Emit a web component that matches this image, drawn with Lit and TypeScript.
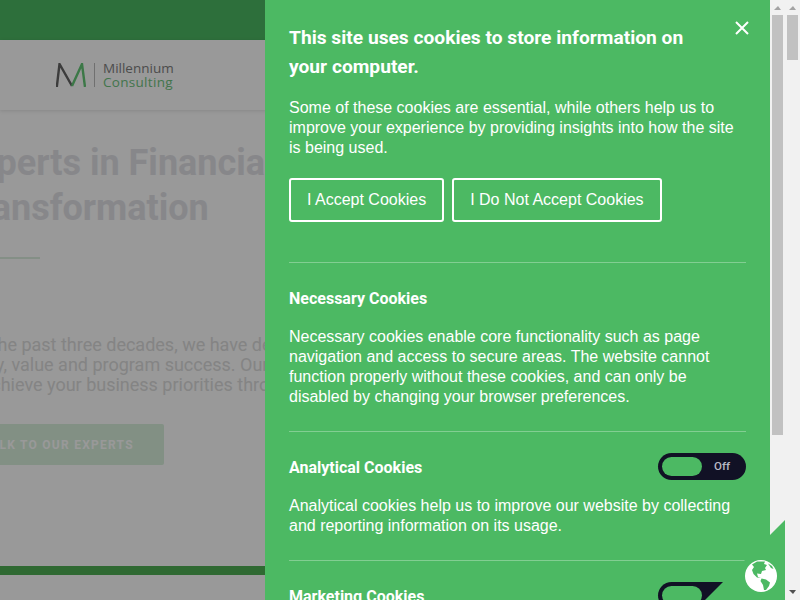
import { LitElement, html, css } from 'lit';
import { customElement } from 'lit/decorators.js';

@customElement('app-root')
export class AppRoot extends LitElement {
  static styles = css`
    :host {
      display: block;
      height: 600px;
      overflow: hidden;
      background: #fff;
      font-family: Roboto, sans-serif;
    }
    .top-bar {
      height: 40px;
      background: #4cb963;
    }
    .site-header {
      height: 70px;
      display: flex;
      align-items: center;
      padding-left: 56px;
      gap: 8px;
      box-shadow: 0 1px 4px rgba(0, 0, 0, 0.12);
    }
    .logo-bar {
      width: 1px;
      height: 24px;
      background: #bbb;
    }
    .logo-words {
      font-family: 'Open Sans', sans-serif;
      font-size: 13.5px;
      line-height: 14px;
      color: #808080;
    }
    .logo-words span {
      display: block;
      color: #6fc480;
      letter-spacing: 0.3px;
    }
    .hero {
      height: 456px;
      margin-left: -42px;
      padding-top: 31px;
      box-sizing: border-box;
      white-space: nowrap;
    }
    h1 {
      margin: 0;
      font-size: 36px;
      line-height: 45px;
      font-weight: 700;
      color: #e2e2e6;
    }
    .rule {
      width: 82px;
      height: 2px;
      margin: 26px 0 76px;
      background: #dceee0;
    }
    .hero p {
      margin: 0;
      padding-left: 3px;
      font-size: 18px;
      line-height: 20px;
      color: #dcdcdc;
    }
    .cta {
      display: block;
      margin-top: 29px;
      width: 206px;
      height: 41px;
      box-sizing: border-box;
      padding-right: 6px;
      line-height: 43px;
      text-align: center;
      border-radius: 2px;
      background: #d9f0dd;
      color: #fff;
      font-size: 12px;
      font-weight: 700;
      letter-spacing: 1.25px;
    }
    .strip {
      height: 9px;
      background: #4fb054;
    }
    .scrim {
      position: fixed;
      inset: 0;
      background: rgba(0, 0, 0, 0.4);
    }
    .panel {
      position: fixed;
      top: 0;
      right: 30px;
      bottom: 0;
      width: 505px;
      box-sizing: border-box;
      overflow-y: auto;
      background: #4cb963;
      color: #fff;
      padding: 23px 24px 0;
      font-family: 'Liberation Sans', Arial, sans-serif;
      font-size: 16px;
      line-height: 20px;
    }
    .close {
      position: absolute;
      top: 21px;
      right: 21px;
      width: 14px;
      height: 14px;
    }
    h2 {
      margin: 0 0 17px;
      font-family: Roboto, sans-serif;
      font-size: 19.2px;
      line-height: 29px;
      font-weight: 700;
      padding-right: 40px;
    }
    .panel p {
      margin: 0;
    }
    .actions {
      display: flex;
      gap: 8px;
      margin: 20px 0 40px;
    }
    .actions button {
      height: 44px;
      padding: 0 16px;
      background: none;
      border: 2px solid #fff;
      border-radius: 3px;
      color: #fff;
      font: 16px 'Liberation Sans', Arial, sans-serif;
    }
    section {
      border-top: 1px solid rgba(255, 255, 255, 0.3);
      padding: 25px 0 24px;
    }
    .row {
      display: flex;
      justify-content: space-between;
      align-items: center;
      height: 22px;
      margin-bottom: 17px;
    }
    h3 {
      margin: 0;
      font-family: Roboto, sans-serif;
      font-size: 16px;
      line-height: 22px;
      font-weight: 700;
    }
    .toggle {
      width: 88px;
      height: 27px;
      margin-top: -4px;
      box-sizing: border-box;
      padding: 4px;
      border-radius: 14px;
      background: #111125;
      display: flex;
      align-items: center;
      color: #b9b9c4;
      font-family: Roboto, sans-serif;
      font-size: 11.5px;
    }
    .toggle i {
      width: 40px;
      height: 19px;
      border-radius: 10px;
      background: #4cb963;
    }
    .toggle b {
      margin: 0 0 1px 12px;
      font-weight: 500;
    }
    .scrollbar {
      position: fixed;
      top: 0;
      bottom: 0;
      width: 15px;
      background: #f1f1f1;
    }
    .scrollbar.inner {
      right: 15px;
    }
    .scrollbar.outer {
      right: 0;
    }
    .thumb {
      position: absolute;
      top: 15px;
      left: 2px;
      width: 11px;
      background: #c1c1c1;
    }
    .inner .thumb {
      height: 420px;
    }
    .outer .thumb {
      height: 45px;
    }
    .arrow {
      position: absolute;
      left: 4px;
      width: 0;
      height: 0;
      border-left: 4px solid transparent;
      border-right: 3.5px solid transparent;
    }
    .arrow.up {
      top: 6px;
      border-bottom: 4px solid #a3a3a3;
    }
    .arrow.down {
      bottom: 6px;
      border-top: 4px solid #505050;
    }
    .corner {
      position: fixed;
      right: 15px;
      bottom: 0;
      width: 80px;
      height: 80px;
      background: #4cb963;
      clip-path: polygon(100% 0, 100% 100%, 0 100%);
    }
    .globe {
      position: fixed;
      right: 23px;
      bottom: 8px;
      width: 32px;
      height: 32px;
    }
  `;

  render() {
    return html`
      <div class="top-bar"></div>
      <header class="site-header">
        <svg width="30" height="24" viewBox="0 0 30 24" fill="none" stroke-width="2.4">
          <path d="M0.8 24 L3.5 1 L16 23" stroke="#646464" />
          <path d="M16 23 L26 1 L29 24" stroke="#64c877" />
        </svg>
        <div class="logo-bar"></div>
        <div class="logo-words">Millennium<span>Consulting</span></div>
      </header>
      <div class="hero">
        <h1>Experts in Financial<br />Transformation</h1>
        <div class="rule"></div>
        <p>
          For the past three decades, we have delivered<br />
          utility, value and program success. Our experts<br />
          to achieve your business priorities through
        </p>
        <a class="cta">TALK TO OUR EXPERTS</a>
      </div>
      <div class="strip"></div>

      <div class="scrim"></div>

      <aside class="panel">
        <svg class="close" viewBox="0 0 14 14" stroke="#fff" stroke-width="2">
          <path d="M1 1 L13 13 M13 1 L1 13" />
        </svg>
        <h2>This site uses cookies to store information on your computer.</h2>
        <p>
          Some of these cookies are essential, while others help us to improve your experience by
          providing insights into how the site is being used.
        </p>
        <div class="actions">
          <button>I Accept Cookies</button>
          <button>I Do Not Accept Cookies</button>
        </div>
        <section>
          <div class="row"><h3>Necessary Cookies</h3></div>
          <p>
            Necessary cookies enable core functionality such as page navigation and access to secure
            areas. The website cannot function properly without these cookies, and can only be
            disabled by changing your browser preferences.
          </p>
        </section>
        <section>
          <div class="row">
            <h3>Analytical Cookies</h3>
            <div class="toggle"><i></i><b>Off</b></div>
          </div>
          <p>
            Analytical cookies help us to improve our website by collecting and reporting
            information on its usage.
          </p>
        </section>
        <section>
          <div class="row">
            <h3>Marketing Cookies</h3>
            <div class="toggle"><i></i><b>Off</b></div>
          </div>
          <p>
            Marketing cookies are used to track visitors across websites to show relevant adverts.
          </p>
        </section>
      </aside>

      <div class="scrollbar inner">
        <div class="arrow up"></div>
        <div class="thumb"></div>
      </div>
      <div class="scrollbar outer">
        <div class="arrow up"></div>
        <div class="thumb"></div>
        <div class="arrow down"></div>
      </div>

      <div class="corner"></div>
      <svg class="globe" viewBox="0 0 32 32">
        <circle cx="16" cy="16" r="16" fill="#fff" />
        <path
          fill="#4cb963"
          d="M7 4.5 L12 1.5 L20 1.5 L19 4 L22 5 L20 8 L21 10 L17 11 L16 14 L12 13.5 L13 17 L16 18 L12 17.5 L8.5 14 L7 10 L9 7 Z"
        />
        <path
          fill="#4cb963"
          d="M16.5 18.5 L21 19.5 L25 22.5 L24 26 L21 30 L19 30 L18 25 L15.5 21 Z"
        />
        <path fill="#4cb963" d="M23 3.5 L27 6 L28.5 9 L26 8 Z" />
      </svg>
    `;
  }
}
